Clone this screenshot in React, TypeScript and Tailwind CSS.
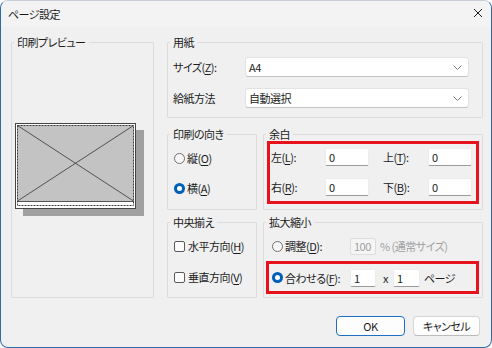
import React from 'react';

const Mn: React.FC<{ k: string }> = ({ k }) => (
    <span>
        (<u className="underline-offset-[2px]">{k}</u>)
    </span>
);

const Radio: React.FC<{ checked?: boolean }> = ({ checked }) =>
    checked ? (
        <span className="w-[11px] h-[11px] shrink-0 rounded-full bg-[#005fb8] flex items-center justify-center">
            <span className="w-[5px] h-[5px] rounded-full bg-white" />
        </span>
    ) : (
        <span className="w-[11px] h-[11px] shrink-0 rounded-full border border-[#707070] bg-[#f7f7f7]" />
    );

const Check: React.FC = () => (
    <span className="w-[11px] h-[11px] shrink-0 rounded-[2px] border border-[#5a5a5a] bg-[#fbfbfb]" />
);

const Field: React.FC<{ value: string; w: string; disabled?: boolean }> = ({ value, w, disabled }) => (
    <div
        className={
            disabled
                ? `${w} shrink-0 h-[17px] bg-[#f5f5f5] border border-[#dddddd] rounded-[2px] px-[3px] text-[11px] leading-[15px] text-[#a0a0a0]`
                : `${w} shrink-0 h-[18px] bg-white border border-[#ececec] border-b-[#9a9a9a] rounded-[2px] px-[3px] text-[11px] leading-[16px]`
        }
    >
        {value}
    </div>
);

const Combo: React.FC<{ value: string }> = ({ value }) => (
    <div className="w-[224px] h-[20px] bg-white border border-[#e3e3e3] border-b-[#c4c4c4] rounded-[3px] flex items-center justify-between pl-[3px] pr-[6px]">
        <span className="text-[11px] leading-[18px]">{value}</span>
        <svg width="9" height="5" viewBox="0 0 9 5" fill="none">
            <path d="M0.5 0.5 L4.5 4.5 L8.5 0.5" stroke="#7a7a7a" strokeWidth="1" />
        </svg>
    </div>
);

const Group: React.FC<{ title: string; className: string; children?: React.ReactNode }> = ({ title, className, children }) => (
    <fieldset className={`border border-[#dcdcdc] rounded-[1px] ${className}`}>
        <legend className="ml-[2px] px-[3px] text-[11px] leading-[16px]">{title}</legend>
        {children}
    </fieldset>
);

const Preview: React.FC = () => (
    <svg width="132" height="96" viewBox="0 0 132 96" className="ml-[2px] mt-[72px]">
        <rect x="9" y="8" width="121" height="86" fill="#a0a0a0" />
        <rect x="1.5" y="1.5" width="120" height="85" fill="#ffffff" stroke="#454545" />
        <rect x="3" y="3" width="117" height="76" fill="#c3c3c3" />
        <line x1="3" y1="79.5" x2="120" y2="79.5" stroke="#555555" />
        <rect x="3.5" y="3.5" width="116" height="80" fill="none" stroke="#3c3c3c" strokeDasharray="2 1" />
        <line x1="3.5" y1="3.5" x2="119.5" y2="79" stroke="#444444" strokeWidth="0.9" />
        <line x1="119.5" y1="3.5" x2="3.5" y2="79" stroke="#444444" strokeWidth="0.9" />
    </svg>
);

const App: React.FC = () => {
    return (
        <div className="w-[492px] h-[348px] overflow-hidden bg-[#f0f0f0] text-[#1b1b1b] font-['Noto_Sans_CJK_JP',sans-serif] [font-feature-settings:'palt'] tracking-[-0.5px] rounded-[8px] border border-[#2f6aa8] border-t-[#c9ced6] flex flex-col">
            {/* Title bar */}
            <div className="h-[26px] shrink-0 bg-[#f3f3f3] flex items-center justify-between pl-[7px] pr-[7px]">
                <span className="text-[11px] leading-[16px]">ページ設定</span>
                <svg width="10" height="10" viewBox="0 0 10 10" className="mr-[1px] -mt-[2px]">
                    <path d="M1 1 L9 9 M9 1 L1 9" stroke="#1b1b1b" strokeWidth="1" />
                </svg>
            </div>

            {/* Body */}
            <div className="flex gap-[13px] pl-[10px] pt-[7px]">
                <Group title="印刷プレビュー" className="w-[143px] h-[264px]">
                    <Preview />
                </Group>

                <div className="flex flex-col w-[316px]">
                    <Group title="用紙" className="h-[84px]">
                        <div className="flex flex-col gap-[11px] pl-[5px] pt-[7px]">
                            <div className="flex items-center">
                                <span className="w-[72px] text-[11px] leading-[16px]">
                                    サイズ<Mn k="Z" />:
                                </span>
                                <Combo value="A4" />
                            </div>
                            <div className="flex items-center">
                                <span className="w-[72px] text-[11px] leading-[16px]">給紙方法</span>
                                <Combo value="自動選択" />
                            </div>
                        </div>
                    </Group>

                    <div className="flex gap-[6px] mt-[8px]">
                        <Group title="印刷の向き" className="w-[90px] h-[84px]">
                            <div className="flex flex-col gap-[10px] pl-[6px] pt-[6px]">
                                <div className="h-[20px] flex items-center gap-[2px] text-[11px] leading-[16px]">
                                    <Radio />
                                    <span>
                                        縦<Mn k="O" />
                                    </span>
                                </div>
                                <div className="h-[20px] flex items-center gap-[2px] text-[11px] leading-[16px]">
                                    <Radio checked />
                                    <span>
                                        横<Mn k="A" />
                                    </span>
                                </div>
                            </div>
                        </Group>

                        <Group title="余白" className="w-[220px] h-[84px]">
                            <div className="ml-[3px] -mt-[1px] w-[212px] h-[63px] border-[3px] border-[#e8121d] flex flex-col gap-[12px] pt-[4px] pl-[1px]">
                                <div className="flex items-center text-[11px] leading-[16px]">
                                    <span className="w-[54px] shrink-0">
                                        左<Mn k="L" />:
                                    </span>
                                    <Field value="0" w="w-[44px]" />
                                    <span className="w-[59px] shrink-0 pl-[14px]">
                                        上<Mn k="T" />:
                                    </span>
                                    <Field value="0" w="w-[44px]" />
                                </div>
                                <div className="flex items-center text-[11px] leading-[16px]">
                                    <span className="w-[54px] shrink-0">
                                        右<Mn k="R" />:
                                    </span>
                                    <Field value="0" w="w-[44px]" />
                                    <span className="w-[59px] shrink-0 pl-[14px]">
                                        下<Mn k="B" />:
                                    </span>
                                    <Field value="0" w="w-[44px]" />
                                </div>
                            </div>
                        </Group>
                    </div>

                    <div className="flex gap-[6px] mt-[4px]">
                        <Group title="中央揃え" className="w-[90px] h-[84px]">
                            <div className="flex flex-col gap-[11px] pl-[6px] pt-[6px]">
                                <div className="h-[20px] flex items-center gap-[3px] text-[11px] leading-[16px]">
                                    <Check />
                                    <span>
                                        水平方向<Mn k="H" />
                                    </span>
                                </div>
                                <div className="h-[20px] flex items-center gap-[3px] text-[11px] leading-[16px]">
                                    <Check />
                                    <span>
                                        垂直方向<Mn k="V" />
                                    </span>
                                </div>
                            </div>
                        </Group>

                        <Group title="拡大縮小" className="w-[220px] h-[84px]">
                            <div className="flex items-center h-[18px] mt-[7px] pl-[8px] text-[11px] leading-[16px]">
                                <div className="w-[78px] shrink-0 flex items-center gap-[2px]">
                                    <Radio />
                                    <span>
                                        調整<Mn k="D" />:
                                    </span>
                                </div>
                                <Field value="100" w="w-[26px]" disabled />
                                <span className="ml-[4px] text-[#a0a0a0]">% (通常サイズ)</span>
                            </div>
                            <div className="ml-[2px] mt-[6px] w-[213px] h-[33px] border-[3px] border-[#e8121d] flex items-center pl-[3px] text-[11px] leading-[16px]">
                                <div className="w-[78px] shrink-0 flex items-center gap-[2px]">
                                    <Radio checked />
                                    <span>
                                        合わせる<Mn k="F" />:
                                    </span>
                                </div>
                                <Field value="1" w="w-[26px]" />
                                <span className="ml-[7px] mr-[5px]">x</span>
                                <Field value="1" w="w-[27px]" />
                                <span className="ml-[4px]">ページ</span>
                            </div>
                        </Group>
                    </div>
                </div>
            </div>

            {/* Buttons */}
            <div className="flex justify-end gap-[8px] pr-[11px] mt-[18px]">
                <button className="w-[69px] h-[20px] bg-[#fdfdfd] border border-[#1f6fc5] rounded-[4px] text-[11px] leading-[16px]">
                    OK
                </button>
                <button className="w-[67px] h-[20px] bg-[#fdfdfd] border border-[#d5d5d5] border-b-[#bcbcbc] rounded-[4px] text-[11px] leading-[16px]">
                    キャンセル
                </button>
            </div>
        </div>
    );
};

export default App;
